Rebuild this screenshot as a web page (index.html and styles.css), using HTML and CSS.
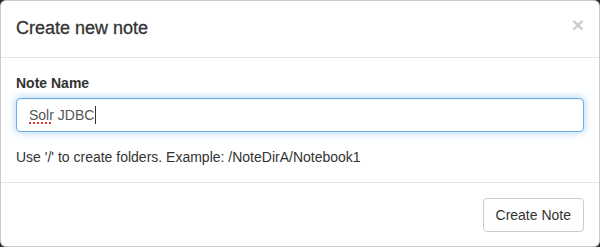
FILE: index.html
```html
<!DOCTYPE html>
<html>
<head>
<meta charset="utf-8">
<link rel="stylesheet" href="styles.css">
</head>
<body>
<div class="modal">
  <div class="modal-header">
    <span class="close">&times;</span>
    <h4 class="modal-title">Create new note</h4>
  </div>
  <div class="modal-body">
    <div class="form-group">
      <label class="label">Note Name</label>
      <div class="form-control"><span class="misspelled">Solr</span> JDBC<span class="caret"></span></div>
    </div>
    <p class="help">Use '/' to create folders. Example: /NoteDirA/Notebook1</p>
  </div>
  <div class="modal-footer">
    <button class="btn">Create Note</button>
  </div>
</div>
</body>
</html>
```
FILE: styles.css
```css
html, body {
  margin: 0;
  padding: 0;
  background: #1d2b38;
}
body {
  font-family: "Helvetica Neue", Helvetica, "Liberation Sans", Arial, sans-serif;
  font-size: 14px;
  line-height: 1.42857143;
  color: #333;
}
.modal {
  box-sizing: border-box;
  width: 600px;
  height: 247px;
  background: #fff;
  border: 1px solid rgba(0, 0, 0, 0.2);
  border-radius: 6px;
  overflow: hidden;
}
.modal-header {
  padding: 15px;
  border-bottom: 1px solid #e5e5e5;
}
.modal-title {
  margin: 0;
  font-size: 18px;
  font-weight: 500;
  line-height: 1.42857143;
  color: #333;
  -webkit-text-stroke: 0.3px #333;
}
.close {
  float: right;
  margin-top: -2px;
  font-size: 21px;
  font-weight: bold;
  line-height: 1;
  color: #000;
  opacity: 0.2;
}
.modal-body {
  padding: 15px;
}
.form-group {
  margin-bottom: 15px;
}
.label {
  display: block;
  margin-bottom: 5px;
  font-weight: bold;
}
.form-control {
  box-sizing: border-box;
  height: 34px;
  padding: 6px 12px;
  font-size: 14px;
  line-height: 20px;
  color: #555;
  background: #fff;
  border: 1px solid #66afe9;
  border-radius: 4px;
  box-shadow: inset 0 1px 1px rgba(0, 0, 0, .075), 0 0 8px rgba(102, 175, 233, .6);
}
.misspelled {
  text-decoration: underline dotted #e0392b;
  text-decoration-thickness: 2px;
  text-underline-offset: 3px;
}
.caret {
  display: inline-block;
  width: 1px;
  height: 18px;
  background: #333;
  vertical-align: -4px;
  margin-left: 1px;
}
.help {
  margin: 0;
}
.modal-footer {
  padding: 15px;
  border-top: 1px solid #e5e5e5;
  display: flex;
  justify-content: flex-end;
}
.btn {
  font-family: inherit;
  font-size: 14px;
  line-height: 20px;
  padding: 6px 12px;
  color: #333;
  background: #fff;
  border: 1px solid #ccc;
  border-radius: 4px;
  cursor: pointer;
}
```
